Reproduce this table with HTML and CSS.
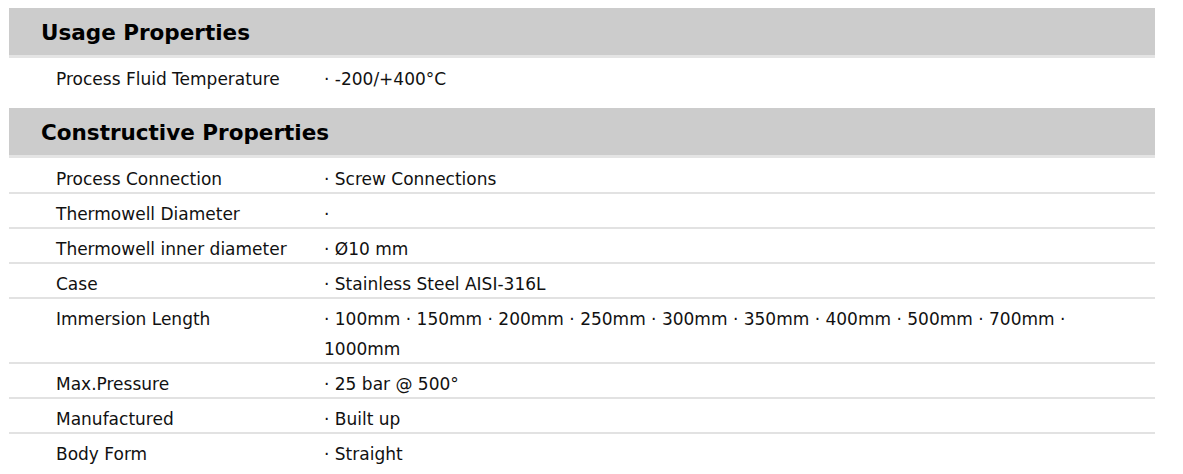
FILE: index.html
```html
<!DOCTYPE html>
<html lang="en">
<head>
    <meta charset="UTF-8">
    <title>Properties</title>
    <link rel="stylesheet" href="styles.css">
</head>
<body>
    <div class="specs">
        <div class="section">
            <h2 class="section-title">Usage Properties</h2>
            <div class="row"><div class="label">Process Fluid Temperature</div><div class="value">· -200/+400°C</div></div>
        </div>
        <div class="section">
            <h2 class="section-title">Constructive Properties</h2>
            <div class="row"><div class="label">Process Connection</div><div class="value">· Screw Connections</div></div>
            <div class="row"><div class="label">Thermowell Diameter</div><div class="value">·</div></div>
            <div class="row"><div class="label">Thermowell inner diameter</div><div class="value">· Ø10 mm</div></div>
            <div class="row"><div class="label">Case</div><div class="value">· Stainless Steel AISI-316L</div></div>
            <div class="row"><div class="label">Immersion Length</div><div class="value">· 100mm · 150mm · 200mm · 250mm · 300mm · 350mm · 400mm · 500mm · 700mm · 1000mm</div></div>
            <div class="row"><div class="label">Max.Pressure</div><div class="value">· 25 bar @ 500°</div></div>
            <div class="row"><div class="label">Manufactured</div><div class="value">· Built up</div></div>
            <div class="row"><div class="label">Body Form</div><div class="value">· Straight</div></div>
        </div>
    </div>
</body>
</html>
```

FILE: styles.css
```css
body { margin: 0; padding: 8px 0 0 9px; background: #fff; font-family: "DejaVu Sans", Verdana, sans-serif; color: #111; }
.specs { width: 1146px; }
.section { margin-bottom: 15px; }
.section-title { margin: 0; height: 47px; line-height: 49px; padding-left: 32px; background: #cccccc; border-bottom: 3px solid #e4e4e4; font-size: 21.5px; font-weight: bold; color: #000; }
.row { display: grid; grid-template-columns: 268px 1fr; padding: 6px 40px 0 47px; margin-bottom: -1px; border-bottom: 2px solid #e2e2e2; font-size: 17px; line-height: 30px; }
.row:last-child { border-bottom-color: transparent; }
.label, .value { margin-bottom: -2px; }
```
